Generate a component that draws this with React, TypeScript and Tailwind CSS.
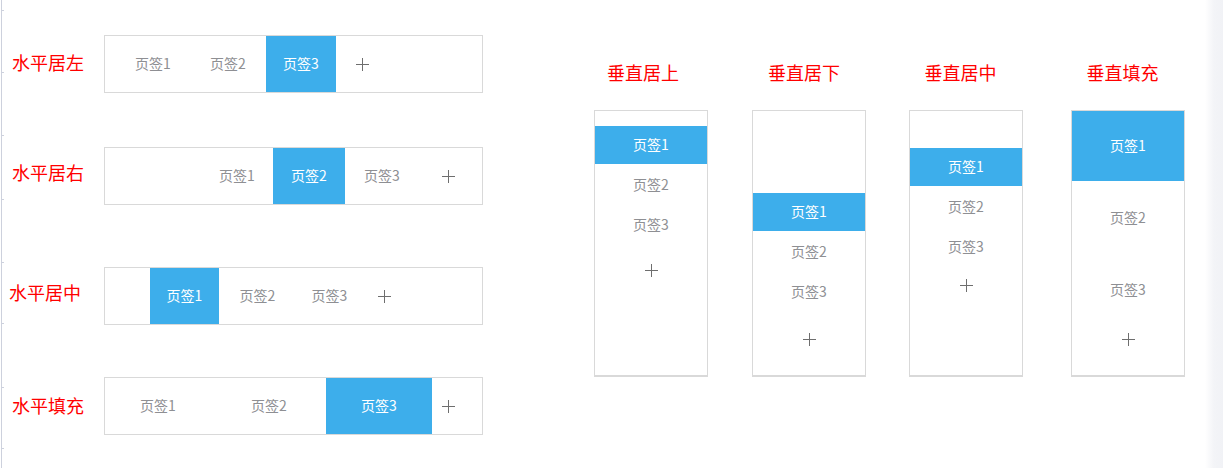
import React from "react";

const font = "font-['Noto_Sans_CJK_SC','Noto_Sans',sans-serif]";

function Plus() {
  return (
    <svg width="13" height="13" viewBox="0 0 13 13">
      <path d="M6.5 0v13M0 6.5h13" stroke="#6e6e6e" strokeWidth="1" />
    </svg>
  );
}

function Tab({ label, active, className = "" }: { label: string; active?: boolean; className?: string }) {
  return (
    <div
      className={`flex shrink-0 items-center justify-center pb-[2px] text-[14px] ${
        active ? "bg-[#3daeeb] text-white" : "text-[#8e8f93]"
      } ${className}`}
    >
      {label}
    </div>
  );
}

function PlusCell({ className = "" }: { className?: string }) {
  return <div className={`flex shrink-0 items-center justify-center ${className}`}><Plus /></div>;
}

function Label({ text, className = "" }: { text: string; className?: string }) {
  return <div className={`text-[18px] leading-[24px] text-[#ff0000] ${className}`}>{text}</div>;
}

function HRow({ label, labelClass, className, children }: { label: string; labelClass: string; className: string; children: React.ReactNode }) {
  return (
    <div className={`flex items-center ${className}`}>
      <Label text={label} className={labelClass} />
      <div className="flex h-[58px] w-[379px] border border-[#d9d9d9]">{children}</div>
    </div>
  );
}

function VCol({ label, labelClass, className, boxClass, children }: { label: string; labelClass: string; className: string; boxClass: string; children: React.ReactNode }) {
  return (
    <div className={`flex w-[114px] flex-col items-center ${className}`}>
      <Label text={label} className={labelClass} />
      <div className={`mt-[26px] flex h-[267px] w-full flex-col border border-b-2 border-[#d9d9d9] ${boxClass}`}>
        {children}
      </div>
    </div>
  );
}

export default function App() {
  return (
    <div className={`flex h-[468px] w-[1223px] overflow-hidden bg-white ${font}`}>
      {/* left ruler line */}
      <div className="ml-[1px] flex h-full w-[1px] flex-col bg-[#cdd1dd]">
        <div className="mt-[10px] h-[1px] w-[3px] bg-[#cdd1dd]" />
        <div className="mt-[61px] h-[1px] w-[3px] bg-[#cdd1dd]" />
        <div className="mt-[62px] h-[1px] w-[3px] bg-[#cdd1dd]" />
        <div className="mt-[63px] h-[1px] w-[3px] bg-[#cdd1dd]" />
        <div className="mt-[62px] h-[1px] w-[3px] bg-[#cdd1dd]" />
        <div className="mt-[60px] h-[1px] w-[3px] bg-[#cdd1dd]" />
        <div className="mt-[63px] h-[1px] w-[3px] bg-[#cdd1dd]" />
        <div className="mt-[60px] h-[1px] w-[3px] bg-[#cdd1dd]" />
      </div>

      {/* horizontal */}
      <div className="flex flex-col pt-[35px]">
        <HRow label="水平居左" labelClass="ml-[10px] w-[92px] mb-[5px]" className="">
          <div className="flex h-full pl-[13px]">
            <Tab label="页签1" className="w-[70px]" />
            <Tab label="页签2" className="ml-[5px] w-[70px]" />
            <Tab label="页签3" active className="ml-[3px] w-[70px]" />
            <PlusCell className="ml-[6px] w-[40px]" />
          </div>
        </HRow>

        <HRow label="水平居右" labelClass="ml-[10px] w-[92px] mb-[9px]" className="mt-[54px]">
          <div className="flex h-full w-full justify-end pr-[14px]">
            <Tab label="页签1" className="w-[72px]" />
            <Tab label="页签2" active className="w-[72px]" />
            <Tab label="页签3" className="ml-[1px] w-[72px]" />
            <PlusCell className="ml-[10px] w-[40px]" />
          </div>
        </HRow>

        <HRow label="水平居中" labelClass="ml-[7px] w-[95px] mb-[9px]" className="mt-[62px]">
          <div className="flex h-full pl-[45px]">
            <Tab label="页签1" active className="w-[69px]" />
            <Tab label="页签2" className="ml-[4px] w-[69px]" />
            <Tab label="页签3" className="ml-[3px] w-[69px]" />
            <PlusCell className="w-[40px]" />
          </div>
        </HRow>

        <HRow label="水平填充" labelClass="ml-[10px] w-[92px] mb-[3px]" className="mt-[52px]">
          <div className="flex h-full w-full pr-[19px]">
            <Tab label="页签1" className="w-[106px]" />
            <Tab label="页签2" className="ml-[5px] w-[106px]" />
            <Tab label="页签3" active className="ml-[4px] w-[106px]" />
            <PlusCell className="ml-[1px] w-[30px]" />
          </div>
        </HRow>
      </div>

      {/* vertical */}
      <div className="ml-[111px] flex pt-[60px]">
        <VCol label="垂直居上" labelClass="mr-[16px]" className="" boxClass="pt-[15px]">
          <Tab label="页签1" active className="h-[38px]" />
          <Tab label="页签2" className="mt-[2px] h-[38px]" />
          <Tab label="页签3" className="mt-[2px] h-[38px]" />
          <PlusCell className="mt-[6px] h-[40px]" />
        </VCol>

        <VCol label="垂直居下" labelClass="mr-[10px]" className="ml-[44px]" boxClass="justify-end pb-[16px]">
          <Tab label="页签1" active className="h-[38px]" />
          <Tab label="页签2" className="mt-[2px] h-[38px]" />
          <Tab label="页签3" className="mt-[2px] h-[38px]" />
          <PlusCell className="mt-[8px] h-[40px]" />
        </VCol>

        <VCol label="垂直居中" labelClass="mr-[11px]" className="ml-[43px]" boxClass="pt-[37px]">
          <Tab label="页签1" active className="h-[38px]" />
          <Tab label="页签2" className="mt-[2px] h-[38px]" />
          <Tab label="页签3" className="mt-[2px] h-[38px]" />
          <PlusCell className="-mt-[1px] h-[40px]" />
        </VCol>

        <VCol label="垂直填充" labelClass="mr-[11px]" className="ml-[48px] w-[113px]" boxClass="">
          <Tab label="页签1" active className="h-[70px]" />
          <Tab label="页签2" className="mt-[2px] h-[70px]" />
          <Tab label="页签3" className="mt-[2px] h-[70px]" />
          <PlusCell className="mt-[2px] h-[24px]" />
        </VCol>
      </div>

      {/* right edge shade */}
      <div className="ml-auto h-full w-[18px] bg-linear-to-r from-white via-[#f3f4f7] to-[#f1f2f6]" />
    </div>
  );
}
